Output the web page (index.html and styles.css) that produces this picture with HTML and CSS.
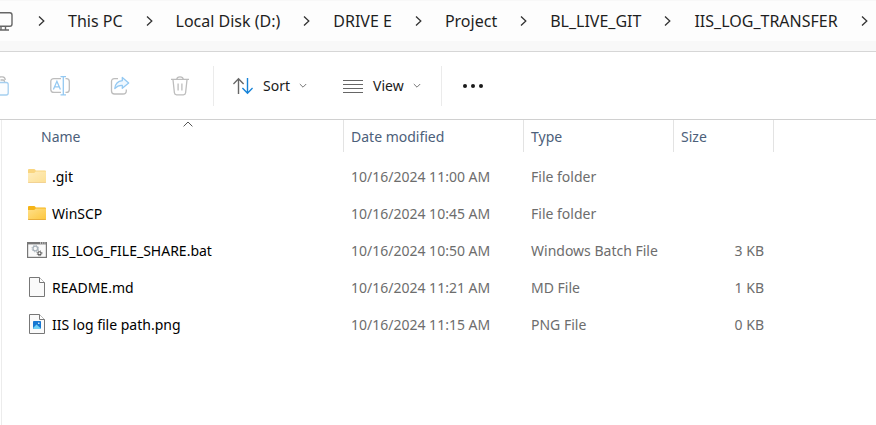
FILE: index.html
```html
<!DOCTYPE html>
<html lang="en">
<head>
<meta charset="utf-8">
<title>IIS_LOG_TRANSFER</title>
<link rel="stylesheet" href="styles.css">
</head>
<body>
<svg class="defs" aria-hidden="true">
  <defs>
    <linearGradient id="folder-fill" x1="0" y1="0" x2="1" y2="1">
      <stop offset="0" stop-color="#ffe08a"/><stop offset="1" stop-color="#fcc63c"/>
    </linearGradient>
    <symbol id="chevron" viewBox="0 0 8 12"><path d="M1.5 1.5 6.3 6 1.5 10.5" fill="none" stroke="#333" stroke-width="1.3"/></symbol>
    <symbol id="caret" viewBox="0 0 8 6"><path d="M.8 1 4 4.2 7.2 1" fill="none" stroke="#777" stroke-width="1"/></symbol>
    <symbol id="folder" viewBox="0 0 20 16">
      <path d="M1 2Q1 1 2 1H7.2Q7.8 1 8.1 1.5L8.8 2.6H18Q19 2.6 19 3.6V8H1Z" fill="#f5b417"/>
      <path d="M1 5H7.2L8.8 3.6H19V14Q19 15 18 15H2Q1 15 1 14Z" fill="url(#folder-fill)"/>
      <path d="M1.2 14.5H18.8" stroke="#e9ae3b" stroke-width="1"/>
    </symbol>
    <symbol id="page" viewBox="0 0 16 20">
      <path d="M.5.5H10.5L15.5 5.5V19.5H.5Z" fill="#fafafa" stroke="#777"/>
      <path d="M10.5.5V5.5H15.5" fill="#fff" stroke="#777"/>
    </symbol>
  </defs>
</svg>

<nav class="address" aria-label="Breadcrumb">
  <svg class="monitor" viewBox="0 0 20 20" aria-hidden="true"><g fill="none" stroke="#666" stroke-width="1.4"><rect x="1" y="1.7" width="18" height="13.6" rx="2.2"/><path d="M8 15.3V19M12.5 15.3V19M5 19H16"/></g></svg>
  <svg class="chevron"><use href="#chevron"/></svg>
  <a href="#">This PC</a>
  <svg class="chevron"><use href="#chevron"/></svg>
  <a href="#">Local Disk (D:)</a>
  <svg class="chevron"><use href="#chevron"/></svg>
  <a href="#">DRIVE E</a>
  <svg class="chevron"><use href="#chevron"/></svg>
  <a href="#">Project</a>
  <svg class="chevron"><use href="#chevron"/></svg>
  <a href="#">BL_LIVE_GIT</a>
  <svg class="chevron"><use href="#chevron"/></svg>
  <a href="#">IIS_LOG_TRANSFER</a>
  <svg class="chevron"><use href="#chevron"/></svg>
</nav>

<div class="toolbar" role="toolbar" aria-label="Commands">
  <div class="edit-group">
    <button class="tool" disabled aria-label="Paste"><svg viewBox="0 0 20 20"><path d="M3 4H5.5M10.5 4H13Q14.5 4 14.5 5.5V6M3 4Q1.5 4 1.5 5.5V17.5Q1.5 19 3 19H6" fill="none" stroke="#bbb" stroke-width="1.3"/><path d="M8.8 2.6Q9.5 .8 11 .8H12.5Q15.2 .8 15.2 4" fill="none" stroke="#bbb" stroke-width="1.3"/><rect x="8" y="6.5" width="10.2" height="12.5" rx="2" fill="#fbfdff" stroke="#a5cff0" stroke-width="1.3"/></svg></button>
    <button class="tool" disabled aria-label="Rename"><svg viewBox="0 0 20 20"><g fill="none" stroke-width="1.3"><path d="M11 2.6H4Q.8 2.6 .8 5.6V13.4Q.8 16.4 4 16.4H11M15.5 2.6H16.5Q19.3 2.6 19.3 5.6V13.4Q19.3 16.4 16.5 16.4H15.5" stroke="#bdbdbd"/><path d="M3.4 13.5 6.9 5.3 10.4 13.5M4.6 10.8H9.2M13.3 1V18.6M10.5.7H16M10.5 18.8H16" stroke="#94c9f2"/></g></svg></button>
    <button class="tool" disabled aria-label="Share"><svg viewBox="0 0 20 20"><g fill="none" stroke-width="1.3"><path d="M8 2.6H4.5Q1.5 2.6 1.5 5.6V15Q1.5 18 4.5 18H13Q16.3 18 16.3 15V13.5" stroke="#bdbdbd"/><path d="M12.3 1.5 18.7 7 12.3 12.3V9.3Q8 9 4.8 12.5Q5.5 5.5 12.3 4.7Z" fill="#f0f8ff" stroke="#94c9f2" stroke-linejoin="round"/></g></svg></button>
    <button class="tool" disabled aria-label="Delete"><svg viewBox="0 0 20 20"><path d="M1 3.4H19M6.7 3.2Q7 .8 10 .8T13.3 3.2M3 3.8 4.4 16.8Q4.6 18.8 6.6 18.8H13.4Q15.4 18.8 15.6 16.8L17 3.8M8.1 7.5V14.5M11.9 7.5V14.5" fill="none" stroke="#bdbdbd" stroke-width="1.3"/></svg></button>
  </div>
  <div class="view-group">
    <button class="menu"><svg class="glyph" viewBox="0 0 20 18"><g fill="none" stroke-width="1.4"><path d="M5.5 17V2M.4 7 5.5 1.8 10.6 7" stroke="#666"/><path d="M14.5 1V15.8M9.4 11 14.5 16.2 19.6 11" stroke="#1683d8"/></g></svg>Sort<svg class="caret"><use href="#caret"/></svg></button>
    <button class="menu"><svg class="glyph" viewBox="0 0 20 18"><path d="M0 3.5H20M0 7.5H20M0 11.5H20M0 15.5H20" stroke="#666" stroke-width="1.2"/></svg>View<svg class="caret"><use href="#caret"/></svg></button>
  </div>
  <button class="more" aria-label="See more"><svg viewBox="0 0 20 6"><g fill="#1a1a1a"><circle cx="2" cy="3" r="2"/><circle cx="10" cy="3" r="2"/><circle cx="18" cy="3" r="2"/></g></svg></button>
</div>

<main class="files">
  <table>
    <colgroup><col class="col-name"><col class="col-date"><col class="col-type"><col class="col-size"><col></colgroup>
    <thead>
      <tr>
        <th scope="col" aria-sort="ascending">Name<svg class="sorted" viewBox="0 0 10 6" aria-hidden="true"><path d="M.6 5.4 5 1 9.4 5.4" fill="none" stroke="#555"/></svg></th>
        <th scope="col">Date modified</th><th scope="col">Type</th><th scope="col">Size</th><td></td>
      </tr>
    </thead>
    <tbody>
      <tr><td><div class="file"><svg class="folder faded"><use href="#folder"/></svg>.git</div></td><td>10/16/2024 11:00 AM</td><td>File folder</td><td></td><td></td></tr>
      <tr><td><div class="file"><svg class="folder"><use href="#folder"/></svg>WinSCP</div></td><td>10/16/2024 10:45 AM</td><td>File folder</td><td></td><td></td></tr>
      <tr><td><div class="file"><svg class="doc" viewBox="0 0 20 20"><rect x=".6" y="2.6" width="18.8" height="14.8" fill="#fafafa" stroke="#777" stroke-width="1.2"/><path d="M0 3.2H20" stroke="#777" stroke-width="2.4"/><path d="M13 3H14M15.2 3H16.2M17.4 3H18.4" stroke="#fff"/><circle cx="8.3" cy="8.5" r="2.3" fill="none" stroke="#a9b3bb" stroke-width="1.3"/><circle cx="8.3" cy="8.5" r="3.3" fill="none" stroke="#a9b3bb" stroke-width="1" stroke-dasharray="1.3 1.3"/><circle cx="12.5" cy="13.3" r="1.6" fill="none" stroke="#555" stroke-width="1.1"/><circle cx="12.5" cy="13.3" r="2.5" fill="none" stroke="#555" stroke-width=".8" stroke-dasharray="1 1"/></svg>IIS_LOG_FILE_SHARE.bat</div></td><td>10/16/2024 10:50 AM</td><td>Windows Batch File</td><td>3 KB</td><td></td></tr>
      <tr><td><div class="file"><svg class="doc"><use href="#page"/></svg>README.md</div></td><td>10/16/2024 11:21 AM</td><td>MD File</td><td>1 KB</td><td></td></tr>
      <tr><td><div class="file"><svg class="doc" viewBox="0 0 20 20"><use href="#page" x="2" width="16" height="20"/><rect x="6" y="7" width="8" height="8" rx=".8" fill="#1677d2"/><path d="M6 14 9.5 10.4 14 14.5Q13.7 15 13 15H7Q6 15 6 14Z" fill="#6fd0f6"/><circle cx="11.8" cy="9.2" r=".8" fill="#fff"/></svg>IIS log file path.png</div></td><td>10/16/2024 11:15 AM</td><td>PNG File</td><td>0 KB</td><td></td></tr>
    </tbody>
  </table>
</main>
</body>
</html>
```
FILE: styles.css
```css
* { box-sizing: border-box; }

body {
  display: flex;
  flex-direction: column;
  min-height: 100vh;
  margin: 0;
  overflow-x: hidden;
  background: #fff;
  color: #1a1a1a;
  font: 14px/20px "Noto Sans", "Open Sans", sans-serif;
}

svg { display: block; flex: none; }
.defs { position: absolute; width: 0; height: 0; }

.address {
  display: flex;
  align-items: center;
  gap: 22px;
  height: 52px;
  padding-bottom: 10px;
  overflow: hidden;
  border-bottom: 1px solid #d6d6d6;
  background: linear-gradient(#f8f8f8 1px, #fdfdfd 1px 41px, #f8f8f8 41px);
  font-size: 16px;
  white-space: nowrap;
}
.address a { color: #1f1f1f; text-decoration: none; }
.monitor { width: 20px; height: 20px; margin: 0 2px 0 -7px; }
.chevron { width: 9px; height: 12px; }

.toolbar {
  display: flex;
  align-items: center;
  height: 68px;
  border-bottom: 1px solid #d0d0d0;
}
button {
  padding: 0;
  border: 0;
  background: none;
  color: inherit;
  font: inherit;
}
.edit-group, .view-group {
  display: flex;
  align-items: center;
  height: 40px;
  border-right: 1px solid #ebebeb;
}
.edit-group { gap: 40px; margin-left: -10px; padding-right: 23px; }
.view-group { gap: 36px; padding: 0 20px 0 19px; }
.tool svg { width: 20px; height: 20px; }
.menu { display: flex; align-items: center; gap: 9px; }
.glyph { width: 20px; height: 18px; margin-right: 1px; }
.caret { width: 8px; height: 6px; }
.more { margin-left: 21px; }
.more svg { width: 20px; height: 6px; }

.files {
  flex: 1;
  margin-left: 1px;
  border-left: 1px solid #ececec;
}
table { width: 100%; border-collapse: separate; border-spacing: 0; table-layout: fixed; }
.col-name { width: 342px; }
.col-date { width: 180px; }
.col-type { width: 150px; }
.col-size { width: 100px; }
th, td { padding: 0 10px 0 7px; text-align: left; white-space: nowrap; }
th {
  position: relative;
  height: 32px;
  padding-top: 2px;
  border-right: 1px solid #e3e3e3;
  color: #4c607a;
  font-weight: 400;
}
th:first-child { padding-left: 39px; }
.sorted { position: absolute; top: 1px; left: 181px; width: 10px; height: 6px; }
tbody::before { content: ""; display: table-row; height: 6px; }
tbody td { height: 37px; color: #6d6d6d; }
tbody td:first-child { padding-left: 25px; color: #000; }
tbody td:nth-child(4) { text-align: right; }
.file { display: flex; align-items: center; gap: 5px; }
.file svg { margin-bottom: 2px; }
.folder { width: 20px; height: 16px; }
.faded { opacity: .55; }
.doc { width: 20px; height: 20px; }
```
